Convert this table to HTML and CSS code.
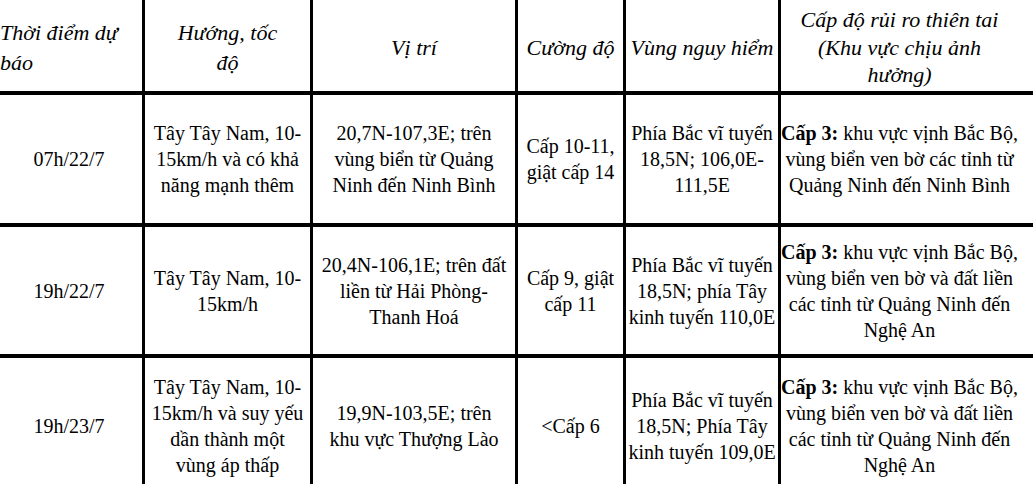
FILE: index.html
```html
<!DOCTYPE html>
<html lang="vi">
<head>
<meta charset="utf-8">
<title>Dự báo bão</title>
<link rel="stylesheet" href="styles.css">
</head>
<body>
<table class="forecast">
  <colgroup>
    <col class="c1"><col class="c2"><col class="c3"><col class="c4"><col class="c5"><col class="c6">
  </colgroup>
  <thead>
    <tr class="head-row">
      <th class="left">Thời điểm dự<br>báo</th>
      <th class="two">Hướng, tốc<br>độ</th>
      <th>Vị trí</th>
      <th>Cường độ</th>
      <th>Vùng nguy hiểm</th>
      <th class="risk">Cấp độ rủi ro thiên tai<br>(Khu vực chịu ảnh<br>hưởng)</th>
    </tr>
  </thead>
  <tbody>
    <tr class="r1">
      <td>07h/22/7</td>
      <td>Tây Tây Nam, 10-<br>15km/h và có khả<br>năng mạnh thêm</td>
      <td>20,7N-107,3E; trên<br>vùng biển từ Quảng<br>Ninh đến Ninh Bình</td>
      <td>Cấp 10-11,<br>giật cấp 14</td>
      <td>Phía Bắc vĩ tuyến<br>18,5N; 106,0E-<br>111,5E</td>
      <td class="risk"><b>Cấp 3:</b> khu vực vịnh Bắc Bộ,<br>vùng biển ven bờ các tỉnh từ<br>Quảng Ninh đến Ninh Bình</td>
    </tr>
    <tr class="r2">
      <td>19h/22/7</td>
      <td>Tây Tây Nam, 10-<br>15km/h</td>
      <td>20,4N-106,1E; trên đất<br>liền từ Hải Phòng-<br>Thanh Hoá</td>
      <td>Cấp 9, giật<br>cấp 11</td>
      <td>Phía Bắc vĩ tuyến<br>18,5N; phía Tây<br>kinh tuyến 110,0E</td>
      <td class="risk"><b>Cấp 3:</b> khu vực vịnh Bắc Bộ,<br>vùng biển ven bờ và đất liền<br>các tỉnh từ Quảng Ninh đến<br>Nghệ An</td>
    </tr>
    <tr class="r3">
      <td>19h/23/7</td>
      <td>Tây Tây Nam, 10-<br>15km/h và suy yếu<br>dần thành một<br>vùng áp thấp</td>
      <td>19,9N-103,5E; trên<br>khu vực Thượng Lào</td>
      <td>&lt;Cấp 6</td>
      <td>Phía Bắc vĩ tuyến<br>18,5N; Phía Tây<br>kinh tuyến 109,0E</td>
      <td class="risk"><b>Cấp 3:</b> khu vực vịnh Bắc Bộ,<br>vùng biển ven bờ và đất liền<br>các tỉnh từ Quảng Ninh đến<br>Nghệ An</td>
    </tr>
  </tbody>
</table>
</body>
</html>
```

FILE: styles.css
```css
html, body {
  margin: 0;
  padding: 0;
  background: #fff;
  overflow: hidden;
}
body {
  font-family: "Liberation Serif", "Times New Roman", serif;
  font-size: 20px;
  color: #000;
}
.forecast {
  border-collapse: collapse;
  table-layout: fixed;
  width: 1065px;
  margin-left: -7px;
}
.c1 { width: 149px; }
.c2 { width: 168px; }
.c3 { width: 205px; }
.c4 { width: 108px; }
.c5 { width: 155px; }
.c6 { width: 280px; }

.forecast th,
.forecast td {
  padding: 0;
  border-left: 3px solid #000;
  border-right: 3px solid #000;
  border-top: 4px solid #000;
  border-bottom: 4px solid #000;
  text-align: center;
  vertical-align: middle;
  white-space: nowrap;
  line-height: 26px;
}
.forecast th {
  font-weight: normal;
  font-style: italic;
  font-size: 22px;
  border-top: none;
  line-height: 27.5px;
  padding-top: 4px;
}
.forecast th.left {
  text-align: left;
  padding-left: 4px;
  line-height: 30px;
}
.forecast th.two {
  line-height: 30px;
}
.forecast .risk {
  padding-right: 40px;
}
.head-row { height: 93px; }
.r1 { height: 132px; }
.r2 { height: 131px; }
.r3 { height: 139px; }
.risk b { font-weight: bold; }
```
